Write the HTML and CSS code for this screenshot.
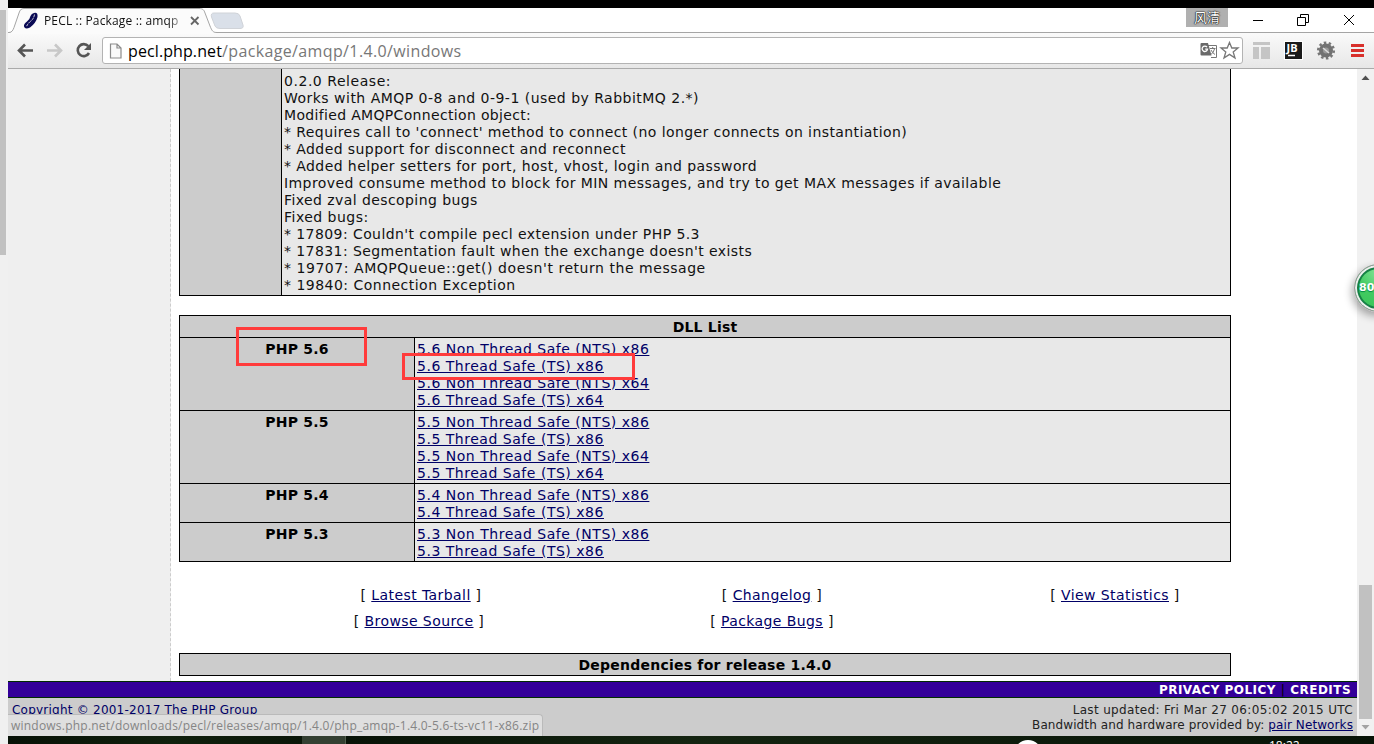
FILE: index.html
```html
<!DOCTYPE html>
<html lang="en">
<head>
<meta charset="utf-8">
<title>PECL :: Package :: amqp</title>
<link rel="stylesheet" href="styles.css">
</head>
<body>
<div class="edge"><div class="edge-thumb"></div></div>
<div class="window">
  <div class="desktop-top"></div>
  <header class="titlebar">
    <svg class="tab-shape" width="250" height="26" viewBox="0 0 250 26">
      <path d="M0 24.5H1C4 24.5 5 22 6 19.500L11 5C12 2 13 .5 16 .5H191C195 .5 196 2 197 5L202 18C204 23 205 24.500 209 24.500V26H0Z" fill="#fbfbfb"/>
      <path d="M0 24.5H1C4 24.5 5 22 6 19.500L11 5C12 2 13 .5 16 .5H191C195 .5 196 2 197 5L202 18C204 23 205 24.500 209 24.500H250" fill="none" stroke="#a5a5a5"/>
      <path d="M206 5H227Q231 5 232 8L235 17Q236 20.500 232 20.500H212Q208 20.500 207 18L203.500 9Q202.500 5 206 5Z" fill="#dae0e9" stroke="#d0d3d8"/>
      <path d="M26 5Q30 4 29.500 9Q28 15 22 19.500Q17 22 16 18.500Q15.500 16 19 13.500Q22 11 22.500 8Q23.500 5.500 26 5Z" fill="#0b0b55"/>
      <path d="M26.500 6.500Q26 10 23.500 12.500Q20 15 18.500 18.500" fill="none" stroke="#c5c5d5" stroke-dasharray="3 .7"/>
      <path d="M183 9L190.500 16.500M190.500 9L183 16.500" stroke="#666" stroke-width="1.800"/>
    </svg>
    <div class="tab-title">PECL :: Package :: amqp</div>
    <div class="user">风清</div>
    <svg class="controls" width="146" height="24" viewBox="0 0 146 24" fill="none" stroke="#000">
      <path d="M25 12.500H35M69.500 9.500H77.500V17.500H69.500ZM72.500 9V6.500H80.500V14.500H78M116 7L126 17M126 7L116 17"/>
    </svg>
  </header>
  <div class="toolbar">
    <svg class="nav" width="94" height="35" viewBox="0 0 94 35" fill="none">
      <path d="M25 17.500H11.500M17 11.500L11 17.500L17 23.500" stroke="#555" stroke-width="2.600"/>
      <path d="M39 17.500H52.500M47 11.500L53 17.500L47 23.500" stroke="#c8c8c8" stroke-width="2.600"/>
      <path d="M80.300 13.200A6 6 0 1 0 81 20" stroke="#555" stroke-width="2.600"/><path d="M83 10V17H76Z" fill="#555"/>
    </svg>
    <div class="omnibox">
      <svg width="14" height="18" viewBox="0 0 14 18"><path d="M1.500 2H8L12 6V16H1.500ZM8 2V6H12" fill="#fafafa" stroke="#8b8b8b" stroke-width="1.200"/></svg>
      <div class="url">pecl.php.net<span>/package/amqp/1.4.0/windows</span></div>
      <svg class="box-icons" width="42" height="22" viewBox="0 0 42 22">
        <path d="M8.500 5.500H17.500V17.500H12" fill="#fff" stroke="#777"/><path d="M2.500 3H9L12.500 15.500H2.500Q1.500 15.500 1.500 14.500V4Q1.500 3 2.500 3Z" fill="#6a6a6a"/>
        <path d="M8 7.200A2.700 2.700 0 1 0 8.500 9.200H6.200" fill="none" stroke="#fff" stroke-width="1.300"/>
        <path d="M11 8.500H16.500M13.700 7V8.500M15.500 9Q14.500 12.500 12 14.500M12 10Q13.500 13 16 14.500" fill="none" stroke="#777"/>
        <path d="M30.500 2.500L32.800 8H39L34.200 11.900L36 18L30.500 14.400L25 18L26.800 11.900L22 8H28.200Z" fill="#fff" stroke="#777" stroke-width="1.300"/>
      </svg>
    </div>
    <svg class="extensions" width="131" height="35" viewBox="0 0 131 35">
      <path d="M10 9H27V12H10ZM10 14H16V26H10ZM18 14H27V26H18Z" fill="#c5c5c5"/>
      <rect x="41" y="8" width="19" height="19" fill="#fff"/><rect x="42" y="9" width="17" height="17" fill="#1b1b1b"/>
      <text x="43.500" y="19" class="jb">JB</text><path d="M45 22.500H52" stroke="#fff" stroke-width="1.500"/>
      <circle cx="83" cy="17.500" r="7.800" fill="none" stroke="#777" stroke-width="2.500" stroke-dasharray="2.500 2.400"/>
      <circle cx="83" cy="17.500" r="5" fill="#999" stroke="#727272" stroke-width="4"/><path d="M80 15L86 20" stroke="#ddd" stroke-width="1.500"/>
      <path d="M108 12.500H121M108 17.500H121M108 22.500H121" stroke="#d8302b" stroke-width="3"/>
    </svg>
  </div>
  <div class="viewport">
    <aside class="sidebar"></aside>
    <main class="content">
      <section class="release">
        <div class="release-label"></div>
        <div class="notes"><span class="loose">0.2.0 Release:</span><br><span class="mid">Works with AMQP 0-8 and 0-9-1 (used by RabbitMQ 2.*)</span><br><span class="tight">Modified AMQPConnection object:</span><br>* Requires call to 'connect' method to connect (no longer connects on instantiation)<br>* Added support for disconnect and reconnect<br>* Added helper setters for port, host, vhost, login and password<br>Improved consume method to block for MIN messages, and try to get MAX messages if available<br>Fixed zval descoping bugs<br><span class="mid">Fixed bugs:</span><br>* 17809: Couldn't compile pecl extension under PHP 5.3<br>* 17831: Segmentation fault when the exchange doesn't exists<br><span class="loose">* 19707: AMQPQueue::get() doesn't return the message</span><br><span class="mid">* 19840: Connection Exception</span></div>
      </section>
      <section class="dll">
        <h2 class="dll-head">DLL List</h2>
        <div class="dll-row"><h3 class="version">PHP 5.6</h3><div class="files"><a>5.6 Non Thread Safe (NTS) x86</a><a>5.6 Thread Safe (TS) x86</a><a>5.6 Non Thread Safe (NTS) x64</a><a>5.6 Thread Safe (TS) x64</a></div></div>
        <div class="dll-row"><h3 class="version">PHP 5.5</h3><div class="files"><a>5.5 Non Thread Safe (NTS) x86</a><a>5.5 Thread Safe (TS) x86</a><a>5.5 Non Thread Safe (NTS) x64</a><a>5.5 Thread Safe (TS) x64</a></div></div>
        <div class="dll-row"><h3 class="version">PHP 5.4</h3><div class="files"><a>5.4 Non Thread Safe (NTS) x86</a><a>5.4 Thread Safe (TS) x86</a></div></div>
        <div class="dll-row"><h3 class="version">PHP 5.3</h3><div class="files"><a>5.3 Non Thread Safe (NTS) x86</a><a>5.3 Thread Safe (TS) x86</a></div></div>
        <div class="mark mark-version"></div>
        <div class="mark mark-file"></div>
      </section>
      <nav class="links">
        <div>[ <a>Latest Tarball</a> ]</div><div>[ <a>Changelog</a> ]</div><div>[ <a>View Statistics</a> ]</div>
        <div class="browse">[ <a>Browse Source</a> ]</div><div>[ <a>Package Bugs</a> ]</div>
      </nav>
      <h2 class="deps">Dependencies for release 1.4.0</h2>
    </main>
    <div class="scrollbar">
      <svg width="17" height="17"><path d="M4.500 11L8.500 6.500L12.500 11Z" fill="#505050"/></svg>
      <div class="thumb"></div>
      <svg width="17" height="17"><path d="M4.500 6L8.500 10.500L12.500 6Z" fill="#a3a3a3"/></svg>
    </div>
    <footer class="footer">
      <div class="policy"><span>PRIVACY POLICY</span><i>|</i><span>CREDITS</span></div>
      <div class="legal">
        <div class="copyright">Copyright © 2001-2017 The PHP Group</div>
        <div class="updated">Last updated: Fri Mar 27 06:05:02 2015 UTC<br><span class="bandwidth">Bandwidth and hardware provided by: <a>pair Networks</a></span></div>
      </div>
    </footer>
    <div class="status">windows.php.net/downloads/pecl/releases/amqp/1.4.0/php_amqp-1.4.0-5.6-ts-vc11-x86.zip</div>
    <div class="ball">80</div>
  </div>
  <div class="taskbar"><div class="task-item"></div><div class="task-orb"></div><div class="clock">18:22</div></div>
</div>
</body>
</html>
```
FILE: styles.css
```css
* { box-sizing: border-box; }
body { margin: 0; width: 1374px; height: 744px; display: flex; overflow: hidden; background: #fff; font-family: "DejaVu Sans", sans-serif; }
svg { display: block; flex: none; }
.edge { width: 8px; flex: none; background: #f0f0f0; padding-top: 10px; }
.edge-thumb { width: 6px; height: 245px; background: #c1c1c1; }
.window { width: 1366px; display: flex; flex-direction: column; }
.desktop-top { height: 8px; background: #000; }
.titlebar { position: relative; height: 25px; display: flex; justify-content: flex-end; background: #fff; border-bottom: 1px solid #a5a5a5; }
.tab-shape { position: absolute; left: 0; top: 0; }
.tab-title { position: absolute; left: 36px; top: 4px; width: 137px; overflow: hidden; white-space: nowrap; font: 12px/18px "Open Sans", sans-serif; color: #111; letter-spacing: .15px; -webkit-mask-image: linear-gradient(90deg, #000 90%, #0005); mask-image: linear-gradient(90deg, #000 90%, #0005); }
.user { width: 42px; height: 19px; background: #b0b0b0; color: #fff; text-align: center; font: 13px/18px "Noto Sans CJK SC", sans-serif; text-shadow: 0 0 1px #000, 0 0 1px #000, 0 0 2px #333; }
.toolbar { height: 36px; display: flex; align-items: center; background: linear-gradient(#fafafa, #e7e7e7); border-bottom: 1px solid #aaa; }
.nav { flex: none; }
.omnibox { width: 1141px; height: 27px; display: flex; align-items: center; padding: 0 1px 0 6px; background: #fff; border: 1px solid #b3b3b3; border-radius: 3px; }
.url { flex: 1; padding-left: 5px; font: 16px/24px "Open Sans", sans-serif; color: #000; letter-spacing: .1px; }
.url span { color: #777; letter-spacing: .37px; }
.jb { font: bold 11px "Open Sans", sans-serif; fill: #fff; }
.viewport { position: relative; height: 667px; display: flex; background: #fff; }
.sidebar { width: 163px; flex: none; background: #efefef; border-right: 1px dashed #ccc; }
.content { width: 1186px; flex: none; padding-left: 8px; font-size: 14px; line-height: 17px; letter-spacing: .42px; color: #111; }
.content a, .footer a { color: #000066; text-decoration: underline; }
.release { width: 1052px; height: 227px; display: flex; border: 1px solid #000; border-top: 0; }
.release-label { width: 102px; flex: none; background: #ccc; border-right: 1px solid #000; }
.notes { flex: 1; padding: 4px 2px 1px; background: #e8e8e8; white-space: nowrap; }
.loose { letter-spacing: .54px; }
.mid { letter-spacing: .48px; }
.tight { letter-spacing: .33px; }
.dll { position: relative; width: 1052px; margin-top: 19px; border: 1px solid #000; }
.dll-head { height: 21px; margin: 0; padding: 3px 2px 1px; background: #ccc; text-align: center; font-size: 14px; line-height: 17px; letter-spacing: .2px; color: #000; }
.dll-row { display: flex; border-top: 1px solid #000; }
.version { width: 235px; margin: 0; padding: 3px 2px 1px; background: #ccc; border-right: 1px solid #000; text-align: center; font-size: 14px; line-height: 17px; letter-spacing: .25px; color: #000; }
.files { flex: 1; padding: 3px 2px 1px; background: #e8e8e8; letter-spacing: .52px; }
.files a { display: block; width: max-content; }
.mark { position: absolute; border: 3px solid #ff3b3b; }
.mark-version { left: 56px; top: 11px; width: 131px; height: 39px; }
.mark-file { left: 222px; top: 37px; width: 233px; height: 27px; }
.links { display: grid; grid-template-columns: 350px 352px 334px; grid-auto-rows: 26px; margin: 25px 0 0 67px; text-align: center; }
.browse { padding-right: 4px; }
.deps { width: 1052px; height: 23px; margin: 14px 0 0; padding: 3px 2px 1px; border: 1px solid #000; background: #ccc; text-align: center; font-size: 14px; line-height: 17px; letter-spacing: .23px; color: #000; }
.scrollbar { width: 17px; flex: none; display: flex; flex-direction: column; background: #f1f1f1; }
.thumb { width: 13px; height: 134px; margin: 499px 2px 0; background: #c1c1c1; }
.footer { position: absolute; left: 0; bottom: 0; width: 1349px; height: 55px; font-size: 12px; line-height: 15px; }
.policy { height: 17px; display: flex; justify-content: flex-end; gap: 5px; padding-right: 6px; background: #309; border: solid #002b00; border-width: 1px 0; color: #fff; font-weight: bold; line-height: 16px; letter-spacing: .45px; }
.policy i { color: #000; font-style: normal; font-weight: normal; }
.legal { height: 38px; display: flex; justify-content: space-between; padding: 5px 4px 0; background: #ccc; }
.copyright { color: #000066; letter-spacing: .23px; }
.updated { text-align: right; color: #222; letter-spacing: .34px; }
.bandwidth { letter-spacing: .1px; }
.status { position: absolute; left: 0; bottom: 0; width: 535px; height: 22px; padding-left: 3px; overflow: hidden; white-space: nowrap; background: #dfdfdf; border: 1px solid #bababa; border-width: 1px 1px 0 0; border-radius: 0 4px 0 0; color: #858585; font: 12px/21px "Open Sans", sans-serif; letter-spacing: .22px; }
.ball { position: absolute; left: 1346px; top: 195px; width: 48px; height: 48px; padding-left: 4px; border-radius: 50%; background: radial-gradient(circle at 50% 15%, #82e397, #42cb62 45%, #38c257); border: 1px solid #999; box-shadow: inset 0 0 0 2px #eee, inset 0 0 0 4px #168146, -2px 4px 8px #0005; color: #fff; font-size: 11px; line-height: 46px; font-weight: bold; text-shadow: 0 1px 1px #084; }
.taskbar { position: relative; height: 8px; overflow: hidden; background: linear-gradient(90deg, #071106, #10200d 12%, #081307 25%, #142411 50%, #071307); }
.task-item { position: absolute; left: 294px; top: 0; width: 44px; height: 8px; background: #344032; border-right: 1px solid #52604f; }
.task-orb { position: absolute; left: 1006px; top: 4px; width: 28px; height: 28px; border: 4px solid #fff; border-radius: 50%; background: #1684b6; }
.clock { position: absolute; left: 1261px; top: 2px; color: #fff; font: 12px/16px "Open Sans", sans-serif; }
```
